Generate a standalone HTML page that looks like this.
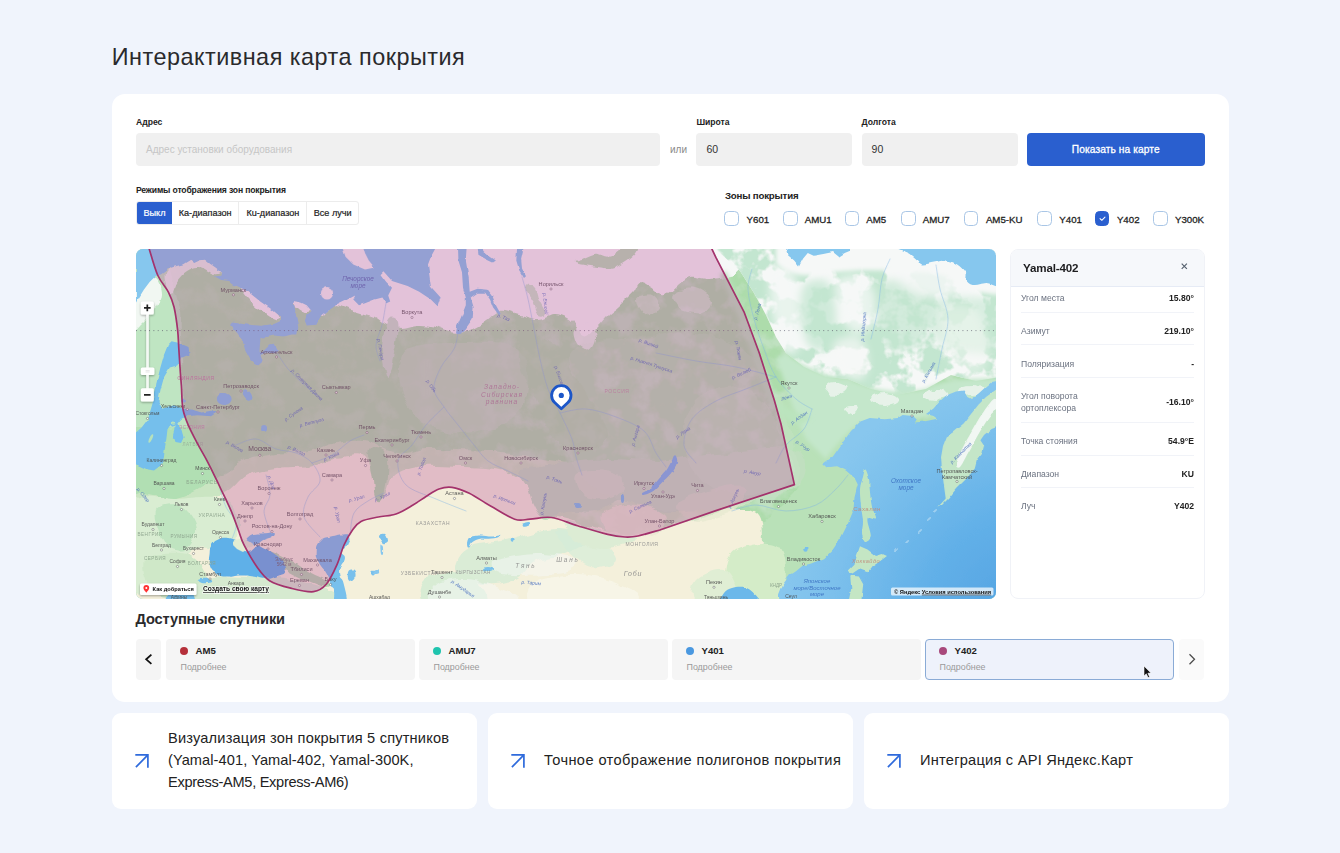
<!DOCTYPE html>
<html lang="ru">
<head>
<meta charset="utf-8">
<title>Интерактивная карта покрытия</title>
<style>
*{box-sizing:border-box;margin:0;padding:0}
html,body{width:1340px;height:853px;overflow:hidden}
body{background:#f0f4fc;font-family:"Liberation Sans",sans-serif;color:#222;position:relative}
.abs{position:absolute;white-space:nowrap}
h1{position:absolute;left:111.8px;top:42px;font-weight:400;font-size:23.4px;line-height:30px;color:#2a2a2c;white-space:nowrap;letter-spacing:0.5px}
.card{position:absolute;left:111.5px;top:93.5px;width:1117px;height:608.5px;background:#fff;border-radius:13px}
.lbl{position:absolute;font-weight:700;font-size:8.6px;line-height:10px;color:#222;white-space:nowrap}
.inp{position:absolute;top:133px;height:32.6px;background:#f0f0f0;border-radius:4px;font-size:10.5px;line-height:33.4px;color:#333;padding-left:10px;white-space:nowrap}
.btn{position:absolute;left:1027px;top:132.5px;width:177.5px;height:33.1px;background:#2a5fcf;border-radius:4px;color:#fff;font-size:10.2px;line-height:33px;text-align:center;font-weight:400;letter-spacing:0.1px;-webkit-text-stroke:0.3px #fff}
.seg{position:absolute;left:136px;top:200.7px;height:24.8px;display:flex;border:1px solid #ececec;border-radius:3px;overflow:hidden;background:#fff}
.seg div{height:100%;-webkit-text-stroke:0.2px currentColor;font-size:9.1px;line-height:23px;color:#222;text-align:center;border-right:1px solid #ececec;white-space:nowrap;font-weight:400}
.seg div:last-child{border-right:0}
.seg .on{background:#2a5fcf;color:#fff;border-right:0}
.cb{position:absolute;top:210.8px;width:14.8px;height:14.8px;border:1px solid #a9c6e6;border-radius:4.5px;background:#fff}
.cb.on{background:#2a5fcf;border-color:#2a5fcf}
.cbl{position:absolute;top:212.5px;font-size:9.7px;line-height:13px;color:#222;white-space:nowrap;font-weight:400;-webkit-text-stroke:0.28px #222}
#map{position:absolute;left:136px;top:249px;width:859.5px;height:349.7px;border-radius:7px;overflow:hidden;background:#8ccbee}
.panel{position:absolute;left:1010px;top:248.5px;width:194.5px;height:350px;border:1px solid #f0f2f7;border-radius:8px;background:#fff;overflow:hidden}
.phead{position:absolute;left:0;top:0;width:100%;height:37px;background:#f6f8fb;border-bottom:1px solid #e6ebf5}
.pk{position:absolute;left:10px;font-size:8.6px;line-height:11.5px;color:#6b7280;white-space:nowrap}
.pv{position:absolute;right:9.5px;font-size:8.6px;line-height:11.5px;color:#222;font-weight:700;white-space:nowrap}
.sep{position:absolute;left:10px;right:9.5px;height:1px;background:#f1f3f8}
.sat{position:absolute;top:639.4px;height:40.2px;width:249px;background:#f5f5f5;border-radius:4px}
.sat i{position:absolute;left:14.2px;top:7.6px;width:8px;height:8px;border-radius:50%}
.sat b{position:absolute;left:29.5px;top:5.5px;font-size:9.6px;line-height:12px;font-weight:700;color:#222}
.sat span{position:absolute;left:14.5px;top:22.3px;font-size:8.9px;line-height:11px;color:#9a9a9a}
.nav{position:absolute;top:639.4px;height:40.2px;width:25.3px;background:#f5f5f5;border-radius:4px}
.feat{position:absolute;top:713px;height:95.5px;width:365px;background:#fff;border-radius:9px}
.feat p{position:absolute;left:56.5px;font-size:14.6px;line-height:22.4px;color:#222;white-space:nowrap}
.feat svg{position:absolute;left:23.9px;top:41px}
</style>
</head>
<body>
<h1>Интерактивная карта покрытия</h1>
<div class="card"></div>

<div class="lbl" style="left:136px;top:116.9px">Адрес</div>
<div class="inp" style="left:136px;width:524px;color:#c6c6c6;font-size:10px">Адрес установки оборудования</div>
<div class="abs" style="left:670px;top:143px;font-size:10px;line-height:13px;color:#8a8a8a">или</div>
<div class="lbl" style="left:696.4px;top:116.9px">Широта</div>
<div class="inp" style="left:696.4px;width:155.8px">60</div>
<div class="lbl" style="left:861.6px;top:116.9px">Долгота</div>
<div class="inp" style="left:861.6px;width:156px">90</div>
<div class="btn">Показать на карте</div>

<div class="lbl" style="left:136px;top:184.8px;letter-spacing:-0.16px">Режимы отображения зон покрытия</div>
<div class="seg">
  <div class="on" style="width:35px">Выкл</div><div style="width:67.4px">Ка-диапазон</div><div style="width:68px">Кu-диапазон</div><div style="width:50.5px">Все лучи</div>
</div>

<div class="abs" style="left:725px;top:189.4px;font-size:9.7px;line-height:13px;font-weight:700;color:#222;letter-spacing:-0.2px">Зоны покрытия</div>
<div class="cb" style="left:724.4px"></div><div class="cbl" style="left:746.6px">Y601</div>
<div class="cb" style="left:783px"></div><div class="cbl" style="left:804.8px">AMU1</div>
<div class="cb" style="left:844.6px"></div><div class="cbl" style="left:866.3px">AM5</div>
<div class="cb" style="left:901.2px"></div><div class="cbl" style="left:922.7px">AMU7</div>
<div class="cb" style="left:963.7px"></div><div class="cbl" style="left:985.9px">AM5-KU</div>
<div class="cb" style="left:1037px"></div><div class="cbl" style="left:1059.3px">Y401</div>
<div class="cb on" style="left:1094.6px"><svg width="14.8" height="14.8" viewBox="0 0 15 15" style="position:absolute;left:-1px;top:-1px"><path d="M5.1 7.7 L6.9 9.4 L10.1 6.1" fill="none" stroke="#fff" stroke-width="1.05" stroke-linecap="round" stroke-linejoin="round"/></svg></div><div class="cbl" style="left:1116.9px">Y402</div>
<div class="cb" style="left:1153.3px"></div><div class="cbl" style="left:1175px">Y300K</div>

<div id="map"><svg width="859.5" height="349.7" viewBox="0 0 859.5 349.7" style="display:block"><defs>
<filter id="rough" x="-5%" y="-5%" width="110%" height="110%"><feTurbulence type="fractalNoise" baseFrequency="0.06" numOctaves="3" seed="7" result="n"/><feDisplacementMap in="SourceGraphic" in2="n" scale="8" xChannelSelector="R" yChannelSelector="G"/></filter>
<filter id="rough2" x="-5%" y="-5%" width="110%" height="110%"><feTurbulence type="fractalNoise" baseFrequency="0.09" numOctaves="3" seed="3" result="n"/><feDisplacementMap in="SourceGraphic" in2="n" scale="9" xChannelSelector="R" yChannelSelector="G"/></filter>
<filter id="coast" x="-5%" y="-5%" width="110%" height="110%"><feTurbulence type="fractalNoise" baseFrequency="0.12" numOctaves="2" seed="11" result="n"/><feDisplacementMap in="SourceGraphic" in2="n" scale="3" xChannelSelector="R" yChannelSelector="G"/></filter>
<filter id="mot" x="0" y="0" width="100%" height="100%" color-interpolation-filters="sRGB"><feTurbulence type="fractalNoise" baseFrequency="0.05" numOctaves="4" seed="5"/><feColorMatrix type="matrix" values="0 0 0 0 0.80  0 0 0 0 0.895  0 0 0 0 0.81  3.5 0 0 0 -1.55"/><feComponentTransfer><feFuncA type="linear" slope="0.6"/></feComponentTransfer></filter>
<filter id="mot2" x="0" y="0" width="100%" height="100%" color-interpolation-filters="sRGB"><feTurbulence type="fractalNoise" baseFrequency="0.04" numOctaves="4" seed="23"/><feColorMatrix type="matrix" values="0 0 0 0 0.765  0 0 0 0 0.90  0 0 0 0 0.815  8 0 0 0 -3.5"/></filter>
<filter id="blur2"><feGaussianBlur stdDeviation="2"/></filter>
<filter id="blur6" x="-20%" y="-20%" width="140%" height="140%"><feGaussianBlur stdDeviation="4.5"/></filter>
<filter id="sh" x="-30%" y="-30%" width="160%" height="160%"><feGaussianBlur in="SourceAlpha" stdDeviation="0.8"/><feOffset dy="0.6"/><feComponentTransfer><feFuncA type="linear" slope="0.35"/></feComponentTransfer><feMerge><feMergeNode/><feMergeNode in="SourceGraphic"/></feMerge></filter>
<radialGradient id="deep" gradientUnits="userSpaceOnUse" cx="900" cy="380" r="260"><stop offset="0" stop-color="#4f9fe0"/><stop offset="0.45" stop-color="#62b0e8"/><stop offset="0.8" stop-color="#7cc0ec"/><stop offset="1" stop-color="#88c7ee"/></radialGradient>
</defs>
<rect x="0" y="0" width="859.5" height="349.7" fill="#addcab"/>
<linearGradient id="mg" gradientUnits="userSpaceOnUse" x1="0" y1="0" x2="860" y2="0"><stop offset="0" stop-color="#fff" stop-opacity="0.35"/><stop offset="0.28" stop-color="#fff" stop-opacity="0.45"/><stop offset="0.5" stop-color="#fff" stop-opacity="1"/><stop offset="1" stop-color="#fff" stop-opacity="1"/></linearGradient><mask id="mm" maskUnits="userSpaceOnUse" x="0" y="0" width="860" height="350"><rect x="0" y="0" width="860" height="350" fill="url(#mg)"/></mask>
<g mask="url(#mm)"><rect x="0" y="0" width="859.5" height="349.7" filter="url(#mot)"/></g>
<g filter="url(#rough)"><polygon points="-5.0,10.0 30.0,10.0 44.0,60.0 48.0,160.0 56.0,185.0 -5.0,185.0" fill="#bfe5c2" /><polygon points="-5.0,178.0 54.0,178.0 62.0,195.0 94.0,258.0 -5.0,258.0" fill="#b1dfb3" /><path d="M640.0 150.0C648.3 143.3 680.0 158.3 700.0 160.0C720.0 161.7 743.3 159.2 760.0 160.0C776.7 160.8 805.0 161.7 800.0 165.0C795.0 168.3 743.0 168.3 730.0 180.0C717.0 191.7 724.5 219.2 722.0 235.0C719.5 250.8 720.3 262.5 715.0 275.0C709.7 287.5 700.8 300.8 690.0 310.0C679.2 319.2 658.3 323.0 650.0 330.0C641.7 337.0 648.3 348.3 640.0 352.0C631.7 355.7 606.7 360.7 600.0 352.0C593.3 343.3 593.3 315.0 600.0 300.0C606.7 285.0 629.7 272.7 640.0 262.0C650.3 251.3 660.3 246.3 662.0 236.0C663.7 225.7 653.7 214.3 650.0 200.0C646.3 185.7 631.7 156.7 640.0 150.0Z" fill="#b9e1b8" /><path d="M180.0 -5.0C248.8 -14.2 515.0 -9.5 585.0 -5.0C655.0 -0.5 599.3 16.5 600.0 22.0C600.7 27.5 594.0 26.7 589.0 28.0C584.0 29.3 575.8 30.0 570.0 30.0C564.2 30.0 558.7 27.0 554.0 28.0C549.3 29.0 545.3 33.5 542.0 36.0C538.7 38.5 536.8 41.5 534.0 43.0C531.2 44.5 528.2 45.8 525.0 45.0C521.8 44.2 518.5 40.0 515.0 38.0C511.5 36.0 506.8 32.3 504.0 33.0C501.2 33.7 500.3 39.2 498.0 42.0C495.7 44.8 492.7 47.3 490.0 50.0C487.3 52.7 485.0 55.3 482.0 58.0C479.0 60.7 475.5 62.7 472.0 66.0C468.5 69.3 464.3 74.7 461.0 78.0C457.7 81.3 454.7 85.0 452.0 86.0C449.3 87.0 447.3 86.0 445.0 84.0C442.7 82.0 440.5 76.7 438.0 74.0C435.5 71.3 433.3 69.5 430.0 68.0C426.7 66.5 422.5 64.7 418.0 65.0C413.5 65.3 408.8 69.8 403.0 70.0C397.2 70.2 389.5 67.3 383.0 66.0C376.5 64.7 370.3 60.7 364.0 62.0C357.7 63.3 352.0 70.3 345.0 74.0C338.0 77.7 329.5 83.3 322.0 84.0C314.5 84.7 306.7 79.3 300.0 78.0C293.3 76.7 287.7 75.8 282.0 76.0C276.3 76.2 271.3 79.0 266.0 79.0C260.7 79.0 254.7 77.8 250.0 76.0C245.3 74.2 242.2 70.0 238.0 68.0C233.8 66.0 229.3 65.3 225.0 64.0C220.7 62.7 216.2 61.3 212.0 60.0C207.8 58.7 203.3 56.0 200.0 56.0C196.7 56.0 194.3 58.3 192.0 60.0C189.7 61.7 188.3 66.0 186.0 66.0C183.7 66.0 180.3 62.7 178.0 60.0C175.7 57.3 171.7 60.8 172.0 50.0C172.3 39.2 111.2 4.2 180.0 -5.0Z" fill="#f6f8f7" /><path d="M438.0 80.0C439.7 76.7 448.3 74.7 452.0 76.0C455.7 77.3 459.7 84.0 460.0 88.0C460.3 92.0 457.0 98.7 454.0 100.0C451.0 101.3 444.7 99.3 442.0 96.0C439.3 92.7 436.3 83.3 438.0 80.0Z" fill="#f6f8f7" opacity="0.75"/><path d="M538.0 44.0C540.7 40.7 553.7 38.7 560.0 40.0C566.3 41.3 575.0 48.0 576.0 52.0C577.0 56.0 571.3 62.7 566.0 64.0C560.7 65.3 548.7 63.3 544.0 60.0C539.3 56.7 535.3 47.3 538.0 44.0Z" fill="#f6f8f7" opacity="0.4"/><path d="M500.0 50.0C501.0 46.7 512.3 44.7 516.0 46.0C519.7 47.3 523.0 54.7 522.0 58.0C521.0 61.3 513.7 67.3 510.0 66.0C506.3 64.7 499.0 53.3 500.0 50.0Z" fill="#f6f8f7" opacity="0.35"/><path d="M437.7 13.6C437.4 12.5 445.5 11.0 449.4 9.7C453.3 8.4 457.1 6.0 461.0 5.8C464.9 5.6 469.5 9.0 472.7 8.7C475.9 8.4 477.5 5.7 480.4 3.9C483.3 2.1 486.4 -1.0 490.0 -2.0C493.6 -3.0 500.5 -3.3 501.8 -2.0C503.1 -0.7 500.2 3.2 497.9 5.8C495.6 8.4 491.8 11.3 488.2 13.6C484.6 15.9 480.4 18.6 476.5 19.4C472.6 20.2 469.1 18.9 464.9 18.4C460.7 17.9 455.8 17.3 451.3 16.5C446.8 15.7 438.0 14.7 437.7 13.6Z" fill="#addcab" opacity="0.85"/><path d="M392.0 36.0C393.7 35.3 398.0 37.3 400.0 40.0C402.0 42.7 402.3 48.0 404.0 52.0C405.7 56.0 410.3 61.7 410.0 64.0C409.7 66.3 404.3 67.7 402.0 66.0C399.7 64.3 398.0 57.7 396.0 54.0C394.0 50.3 390.7 47.0 390.0 44.0C389.3 41.0 390.3 36.7 392.0 36.0Z" fill="#addcab" opacity="0.6"/><path d="M104.0 38.0C105.0 37.0 113.3 41.2 118.0 44.0C122.7 46.8 127.5 51.2 132.0 55.0C136.5 58.8 143.7 64.3 145.0 67.0C146.3 69.7 143.2 71.8 140.0 71.0C136.8 70.2 130.7 65.5 126.0 62.0C121.3 58.5 115.7 54.0 112.0 50.0C108.3 46.0 103.0 39.0 104.0 38.0Z" fill="#f6f8f7" /><path d="M30.0 22.0C32.7 18.3 41.0 16.0 46.0 14.0C51.0 12.0 55.3 10.3 60.0 10.0C64.7 9.7 69.7 10.0 74.0 12.0C78.3 14.0 85.3 19.8 86.0 22.0C86.7 24.2 81.7 25.7 78.0 25.0C74.3 24.3 68.3 18.5 64.0 18.0C59.7 17.5 55.7 19.7 52.0 22.0C48.3 24.3 44.7 28.3 42.0 32.0C39.3 35.7 38.0 43.3 36.0 44.0C34.0 44.7 31.0 39.7 30.0 36.0C29.0 32.3 27.3 25.7 30.0 22.0Z" fill="#f6f8f7" opacity="0.8"/><path d="M157.0 51.0C159.0 50.2 168.8 53.2 172.0 55.0C175.2 56.8 176.7 60.5 176.0 62.0C175.3 63.5 170.7 64.3 168.0 64.0C165.3 63.7 161.8 62.2 160.0 60.0C158.2 57.8 155.0 51.8 157.0 51.0Z" fill="#f6f8f7" /><path d="M-5.0 48.0C-2.8 40.0 3.8 37.0 8.0 34.0C12.2 31.0 17.2 28.3 20.0 30.0C22.8 31.7 25.2 39.0 25.0 44.0C24.8 49.0 22.0 55.0 19.0 60.0C16.0 65.0 11.0 70.3 7.0 74.0C3.0 77.7 -3.0 86.3 -5.0 82.0C-7.0 77.7 -7.2 56.0 -5.0 48.0Z" fill="#f6f8f7" opacity="0.9"/><path d="M252.0 72.0C254.7 67.7 260.7 69.3 262.0 74.0C263.3 78.7 261.7 90.7 260.0 100.0C258.3 109.3 254.3 130.0 252.0 130.0C249.7 130.0 246.0 109.7 246.0 100.0C246.0 90.3 249.3 76.3 252.0 72.0Z" fill="#c9e3cc" /><path d="M272.0 100.0C283.0 93.2 312.0 94.0 330.0 94.0C348.0 94.0 369.7 92.3 380.0 100.0C390.3 107.7 393.3 128.0 392.0 140.0C390.7 152.0 383.7 164.7 372.0 172.0C360.3 179.3 337.0 184.3 322.0 184.0C307.0 183.7 291.7 178.2 282.0 170.0C272.3 161.8 265.7 146.7 264.0 135.0C262.3 123.3 261.0 106.8 272.0 100.0Z" fill="#c6e2c6" opacity="0.5"/><path d="M80.0 230.0C91.7 223.5 100.0 215.3 110.0 211.0C120.0 206.7 129.5 205.5 140.0 204.0C150.5 202.5 163.8 203.7 173.0 202.0C182.2 200.3 186.0 195.8 195.0 194.0C204.0 192.2 217.8 190.0 227.0 191.0C236.2 192.0 242.8 197.8 250.0 200.0C257.2 202.2 263.3 204.0 270.0 204.0C276.7 204.0 281.7 200.5 290.0 200.0C298.3 199.5 310.0 200.7 320.0 201.0C330.0 201.3 339.2 201.0 350.0 202.0C360.8 203.0 373.3 205.3 385.0 207.0C396.7 208.7 405.8 209.5 420.0 212.0C434.2 214.5 453.3 218.7 470.0 222.0C486.7 225.3 501.7 229.7 520.0 232.0C538.3 234.3 560.0 235.0 580.0 236.0C600.0 237.0 626.3 238.0 640.0 238.0C653.7 238.0 668.7 232.3 662.0 236.0C655.3 239.7 606.2 254.3 600.0 260.0C593.8 265.7 621.3 258.3 625.0 270.0C628.7 281.7 626.2 315.8 622.0 330.0C617.8 344.2 704.5 350.8 600.0 355.0C495.5 359.2 95.8 372.5 -5.0 355.0C-105.8 337.5 -12.5 267.5 -5.0 250.0C2.5 232.5 25.8 253.3 40.0 250.0C54.2 246.7 68.3 236.5 80.0 230.0Z" fill="#f4f0db" opacity="0.38"/><path d="M88.0 244.0C99.7 239.2 101.3 231.0 110.0 227.0C118.7 223.0 129.5 221.5 140.0 220.0C150.5 218.5 163.8 219.7 173.0 218.0C182.2 216.3 186.0 211.8 195.0 210.0C204.0 208.2 220.2 204.7 227.0 207.0C233.8 209.3 233.8 217.5 236.0 224.0C238.2 230.5 237.7 242.7 240.0 246.0C242.3 249.3 247.3 246.8 250.0 244.0C252.7 241.2 252.7 232.8 256.0 229.0C259.3 225.2 264.3 223.0 270.0 221.0C275.7 219.0 281.7 217.5 290.0 217.0C298.3 216.5 310.0 217.7 320.0 218.0C330.0 218.3 340.0 217.8 350.0 219.0C360.0 220.2 373.0 221.5 380.0 225.0C387.0 228.5 388.3 233.8 392.0 240.0C395.7 246.2 395.7 257.0 402.0 262.0C408.3 267.0 418.7 266.7 430.0 270.0C441.3 273.3 456.7 279.5 470.0 282.0C483.3 284.5 495.0 287.0 510.0 285.0C525.0 283.0 545.0 274.2 560.0 270.0C575.0 265.8 589.2 260.0 600.0 260.0C610.8 260.0 621.3 258.3 625.0 270.0C628.7 281.7 626.2 315.8 622.0 330.0C617.8 344.2 704.5 350.8 600.0 355.0C495.5 359.2 95.8 371.5 -5.0 355.0C-105.8 338.5 -12.5 272.5 -5.0 256.0C2.5 239.5 24.5 258.0 40.0 256.0C55.5 254.0 76.3 248.8 88.0 244.0Z" fill="#f4f0db" /><path d="M-5.0 254.0C2.5 239.0 24.2 250.7 40.0 250.0C55.8 249.3 79.7 245.3 90.0 250.0C100.3 254.7 101.7 269.7 102.0 278.0C102.3 286.3 99.0 296.3 92.0 300.0C85.0 303.7 70.3 295.0 60.0 300.0C49.7 305.0 40.8 323.3 30.0 330.0C19.2 336.7 0.8 352.7 -5.0 340.0C-10.8 327.3 -12.5 269.0 -5.0 254.0Z" fill="#d9edd2" /><path d="M20.0 262.0C22.5 255.7 38.3 255.0 45.0 258.0C51.7 261.0 59.2 273.0 60.0 280.0C60.8 287.0 55.0 297.3 50.0 300.0C45.0 302.7 35.0 302.3 30.0 296.0C25.0 289.7 17.5 268.3 20.0 262.0Z" fill="#bfe4c0" /><path d="M10.0 310.0C15.0 303.3 40.0 302.5 50.0 305.0C60.0 307.5 68.3 318.3 70.0 325.0C71.7 331.7 68.3 341.7 60.0 345.0C51.7 348.3 28.3 350.8 20.0 345.0C11.7 339.2 5.0 316.7 10.0 310.0Z" fill="#cfe8c8" /><path d="M70.0 330.0C78.3 325.5 96.7 328.0 110.0 328.0C123.3 328.0 136.7 328.0 150.0 330.0C163.3 332.0 182.3 335.8 190.0 340.0C197.7 344.2 217.7 352.5 196.0 355.0C174.3 357.5 81.0 359.2 60.0 355.0C39.0 350.8 61.7 334.5 70.0 330.0Z" fill="#d6ead0" /><path d="M126.0 300.0C128.7 299.7 135.0 302.0 140.0 304.0C145.0 306.0 150.7 309.0 156.0 312.0C161.3 315.0 166.0 318.7 172.0 322.0C178.0 325.3 189.0 329.3 192.0 332.0C195.0 334.7 193.7 338.2 190.0 338.0C186.3 337.8 176.3 333.7 170.0 331.0C163.7 328.3 157.7 325.2 152.0 322.0C146.3 318.8 140.7 314.7 136.0 312.0C131.3 309.3 125.7 308.0 124.0 306.0C122.3 304.0 123.3 300.3 126.0 300.0Z" fill="#b4d8b0" /><path d="M233.0 200.0C235.2 196.7 246.0 197.3 249.0 202.0C252.0 206.7 251.5 220.0 251.0 228.0C250.5 236.0 248.0 247.0 246.0 250.0C244.0 253.0 240.7 250.7 239.0 246.0C237.3 241.3 237.0 229.7 236.0 222.0C235.0 214.3 230.8 203.3 233.0 200.0Z" fill="#addcab" /><path d="M385.0 222.0C389.7 217.8 405.8 217.0 420.0 215.0C434.2 213.0 453.3 210.5 470.0 210.0C486.7 209.5 501.7 212.8 520.0 212.0C538.3 211.2 556.7 207.0 580.0 205.0C603.3 203.0 646.3 194.8 660.0 200.0C673.7 205.2 672.0 226.7 662.0 236.0C652.0 245.3 617.0 251.7 600.0 256.0C583.0 260.3 573.3 261.0 560.0 262.0C546.7 263.0 531.7 264.0 520.0 262.0C508.3 260.0 500.0 250.0 490.0 250.0C480.0 250.0 470.0 260.0 460.0 262.0C450.0 264.0 438.3 260.7 430.0 262.0C421.7 263.3 415.3 270.7 410.0 270.0C404.7 269.3 401.0 263.0 398.0 258.0C395.0 253.0 394.2 246.0 392.0 240.0C389.8 234.0 380.3 226.2 385.0 222.0Z" fill="#c0dfbf" /><path d="M440.0 225.0C444.2 221.2 461.7 219.8 470.0 222.0C478.3 224.2 490.0 233.3 490.0 238.0C490.0 242.7 477.5 248.8 470.0 250.0C462.5 251.2 450.0 249.2 445.0 245.0C440.0 240.8 435.8 228.8 440.0 225.0Z" fill="#e4e8d0" opacity="0.45"/><path d="M468.0 262.0C473.0 257.8 489.7 254.0 500.0 255.0C510.3 256.0 526.7 262.8 530.0 268.0C533.3 273.2 526.7 282.7 520.0 286.0C513.3 289.3 498.3 289.0 490.0 288.0C481.7 287.0 473.7 284.3 470.0 280.0C466.3 275.7 463.0 266.2 468.0 262.0Z" fill="#ece8d4" opacity="0.75"/><path d="M540.0 255.0C543.3 249.7 568.3 242.8 580.0 240.0C591.7 237.2 606.7 234.7 610.0 238.0C613.3 241.3 608.3 254.3 600.0 260.0C591.7 265.7 570.0 272.8 560.0 272.0C550.0 271.2 536.7 260.3 540.0 255.0Z" fill="#dfe6cc" opacity="0.5"/><path d="M330.0 300.0C338.3 294.5 355.0 295.3 370.0 292.0C385.0 288.7 406.7 280.3 420.0 280.0C433.3 279.7 448.3 285.8 450.0 290.0C451.7 294.2 438.3 301.3 430.0 305.0C421.7 308.7 408.3 307.8 400.0 312.0C391.7 316.2 388.3 326.2 380.0 330.0C371.7 333.8 360.0 335.8 350.0 335.0C340.0 334.2 323.3 330.8 320.0 325.0C316.7 319.2 321.7 305.5 330.0 300.0Z" fill="#cfe9d4" opacity="0.7"/><path d="M360.0 312.0C366.3 308.8 386.7 305.3 400.0 305.0C413.3 304.7 435.0 307.2 440.0 310.0C445.0 312.8 438.3 319.3 430.0 322.0C421.7 324.7 401.3 325.7 390.0 326.0C378.7 326.3 367.0 326.3 362.0 324.0C357.0 321.7 353.7 315.2 360.0 312.0Z" fill="#f6f8f7" opacity="0.5"/><path d="M420.0 282.0C425.0 280.3 450.0 285.3 460.0 290.0C470.0 294.7 480.8 305.3 480.0 310.0C479.2 314.7 463.3 319.7 455.0 318.0C446.7 316.3 435.8 306.0 430.0 300.0C424.2 294.0 415.0 283.7 420.0 282.0Z" fill="#d4ecd8" opacity="0.7"/><path d="M290.0 330.0C296.7 325.2 320.0 322.3 330.0 326.0C340.0 329.7 356.7 347.2 350.0 352.0C343.3 356.8 300.0 358.7 290.0 355.0C280.0 351.3 283.3 334.8 290.0 330.0Z" fill="#d8ecd4" /><path d="M430.0 272.0C435.0 270.7 458.3 281.0 470.0 284.0C481.7 287.0 500.0 287.3 500.0 290.0C500.0 292.7 480.0 299.7 470.0 300.0C460.0 300.3 446.7 296.7 440.0 292.0C433.3 287.3 425.0 273.3 430.0 272.0Z" fill="#dcecd4" /><path d="M300.0 335.0C305.0 330.8 320.0 329.5 330.0 330.0C340.0 330.5 351.7 334.3 360.0 338.0C368.3 341.7 390.0 349.2 380.0 352.0C370.0 354.8 313.3 357.8 300.0 355.0C286.7 352.2 295.0 339.2 300.0 335.0Z" fill="#f6f8f7" opacity="0.5"/><path d="M400.0 332.0C406.7 327.2 426.7 325.7 440.0 326.0C453.3 326.3 470.0 329.7 480.0 334.0C490.0 338.3 513.3 348.5 500.0 352.0C486.7 355.5 416.7 358.3 400.0 355.0C383.3 351.7 393.3 336.8 400.0 332.0Z" fill="#f8f6ea" opacity="0.8"/><path d="M600.0 300.0C608.3 295.2 631.7 291.0 640.0 296.0C648.3 301.0 650.0 320.2 650.0 330.0C650.0 339.8 649.0 350.8 640.0 355.0C631.0 359.2 604.3 360.0 596.0 355.0C587.7 350.0 589.3 334.2 590.0 325.0C590.7 315.8 591.7 304.8 600.0 300.0Z" fill="#d4ecc8" /><path d="M560.0 330.0C565.0 324.5 583.3 317.8 590.0 322.0C596.7 326.2 605.0 349.5 600.0 355.0C595.0 360.5 566.7 359.2 560.0 355.0C553.3 350.8 555.0 335.5 560.0 330.0Z" fill="#e0eed4" /><path d="M440.0 100.0C452.5 88.3 480.0 92.7 500.0 90.0C520.0 87.3 540.0 80.7 560.0 84.0C580.0 87.3 605.0 95.7 620.0 110.0C635.0 124.3 643.3 149.7 650.0 170.0C656.7 190.3 668.3 217.7 660.0 232.0C651.7 246.3 620.0 251.0 600.0 256.0C580.0 261.0 560.0 263.0 540.0 262.0C520.0 261.0 496.7 257.0 480.0 250.0C463.3 243.0 449.2 235.0 440.0 220.0C430.8 205.0 425.0 180.0 425.0 160.0C425.0 140.0 427.5 111.7 440.0 100.0Z" fill="#d2e8d2" opacity="0.2"/><path d="M560.0 150.0C570.3 140.7 595.8 135.0 610.0 140.0C624.2 145.0 637.5 165.0 645.0 180.0C652.5 195.0 660.8 219.0 655.0 230.0C649.2 241.0 624.2 245.0 610.0 246.0C595.8 247.0 580.3 244.3 570.0 236.0C559.7 227.7 549.7 210.3 548.0 196.0C546.3 181.7 549.7 159.3 560.0 150.0Z" fill="#d8ead6" opacity="0.2"/><path d="M388.0 92.0C394.0 88.7 410.3 90.3 420.0 98.0C429.7 105.7 437.3 123.7 446.0 138.0C454.7 152.3 471.0 173.3 472.0 184.0C473.0 194.7 460.7 200.7 452.0 202.0C443.3 203.3 428.7 200.7 420.0 192.0C411.3 183.3 406.0 162.3 400.0 150.0C394.0 137.7 386.0 127.7 384.0 118.0C382.0 108.3 382.0 95.3 388.0 92.0Z" fill="#addcab" opacity="0.55"/></g>
<clipPath id="ne"><polygon points="574.0,-5.0 865.0,-5.0 865.0,128.0 840.0,132.0 815.0,126.0 790.0,140.0 760.0,146.0 735.0,140.0 712.0,130.0 690.0,128.0 668.0,118.0 650.0,104.0 640.0,88.0 630.0,66.0 618.0,44.0 604.0,22.0"/></clipPath>
<g clip-path="url(#ne)"><rect x="560" y="-5" width="310" height="180" fill="#f6f8f7"/><rect x="560" y="0" width="300" height="175" filter="url(#mot2)"/>
<g filter="url(#blur6)"><path d="M636.0 22.0C639.0 16.7 647.3 15.0 652.0 18.0C656.7 21.0 661.3 31.3 664.0 40.0C666.7 48.7 668.3 60.0 668.0 70.0C667.7 80.0 665.3 94.3 662.0 100.0C658.7 105.7 651.7 107.3 648.0 104.0C644.3 100.7 642.3 89.0 640.0 80.0C637.7 71.0 634.7 59.7 634.0 50.0C633.3 40.3 633.0 27.3 636.0 22.0Z" fill="#f6f8f7" opacity="0.75"/><path d="M668.0 36.0C672.3 31.0 684.7 28.7 690.0 32.0C695.3 35.3 698.7 46.7 700.0 56.0C701.3 65.3 700.7 80.3 698.0 88.0C695.3 95.7 688.7 101.3 684.0 102.0C679.3 102.7 673.3 98.7 670.0 92.0C666.7 85.3 664.3 71.3 664.0 62.0C663.7 52.7 663.7 41.0 668.0 36.0Z" fill="#c3e6d0" opacity="0.75"/><path d="M702.0 30.0C706.3 26.7 719.7 24.7 726.0 28.0C732.3 31.3 738.3 42.0 740.0 50.0C741.7 58.0 739.3 70.3 736.0 76.0C732.7 81.7 725.0 85.0 720.0 84.0C715.0 83.0 709.3 76.0 706.0 70.0C702.7 64.0 700.7 54.7 700.0 48.0C699.3 41.3 697.7 33.3 702.0 30.0Z" fill="#f6f8f7" opacity="0.75"/><path d="M742.0 36.0C747.0 29.7 761.3 30.7 770.0 32.0C778.7 33.3 790.3 36.0 794.0 44.0C797.7 52.0 795.0 70.7 792.0 80.0C789.0 89.3 783.0 97.0 776.0 100.0C769.0 103.0 756.0 103.0 750.0 98.0C744.0 93.0 741.3 80.3 740.0 70.0C738.7 59.7 737.0 42.3 742.0 36.0Z" fill="#c3e6d0" opacity="0.7"/><path d="M760.0 14.0C764.3 10.0 779.7 9.3 790.0 10.0C800.3 10.7 815.3 13.7 822.0 18.0C828.7 22.3 831.7 31.0 830.0 36.0C828.3 41.0 819.7 46.3 812.0 48.0C804.3 49.7 792.0 48.3 784.0 46.0C776.0 43.7 768.0 39.3 764.0 34.0C760.0 28.7 755.7 18.0 760.0 14.0Z" fill="#f6f8f7" opacity="0.8"/><path d="M796.0 52.0C802.0 47.3 819.0 47.3 830.0 48.0C841.0 48.7 856.7 47.3 862.0 56.0C867.3 64.7 866.3 92.0 862.0 100.0C857.7 108.0 845.3 104.7 836.0 104.0C826.7 103.3 813.0 100.7 806.0 96.0C799.0 91.3 795.7 83.3 794.0 76.0C792.3 68.7 790.0 56.7 796.0 52.0Z" fill="#c3e6d0" opacity="0.6"/><path d="M700.0 92.0C704.0 88.7 716.7 85.0 722.0 88.0C727.3 91.0 731.3 103.0 732.0 110.0C732.7 117.0 730.0 127.3 726.0 130.0C722.0 132.7 712.7 129.7 708.0 126.0C703.3 122.3 699.3 113.7 698.0 108.0C696.7 102.3 696.0 95.3 700.0 92.0Z" fill="#f6f8f7" opacity="0.7"/><path d="M806.0 60.0C810.7 54.3 828.3 53.0 836.0 58.0C843.7 63.0 850.3 79.0 852.0 90.0C853.7 101.0 851.0 119.0 846.0 124.0C841.0 129.0 828.3 125.3 822.0 120.0C815.7 114.7 810.7 102.0 808.0 92.0C805.3 82.0 801.3 65.7 806.0 60.0Z" fill="#f6f8f7" opacity="0.45"/></g>
<path d="M640 -5H865V46C840 44 824 40 812 28C800 22 780 24 760 22C730 20 700 22 680 26C660 28 648 22 640 14Z" fill="#f6f8f7" filter="url(#blur2)"/>
</g>
<path d="M650 104C668 118 690 128 712 130C735 140 760 146 790 140C815 126 840 132 865 128V160C840 150 820 150 800 166C780 172 750 172 724 174C712 182 700 196 690 210L670 190C660 170 652 140 640 110Z" fill="#c4e7cb" filter="url(#blur2)"/>
<g opacity="0.7" filter="url(#rough2)"><ellipse cx="748" cy="150" rx="14" ry="6" fill="#f6f8f7"/><ellipse cx="800" cy="146" rx="12" ry="5" fill="#f6f8f7"/><ellipse cx="836" cy="142" rx="14" ry="5" fill="#f6f8f7"/><ellipse cx="700" cy="140" rx="10" ry="6" fill="#f6f8f7"/><ellipse cx="716" cy="160" rx="7" ry="4" fill="#f6f8f7"/></g>
<path d="M590 22C598 40 606 58 614 80C622 104 630 126 640 150C650 160 664 166 676 168L664 176C650 172 640 164 632 150C624 128 616 104 608 82C600 60 592 44 584 26Z" fill="#bbe4be" filter="url(#blur2)"/>
<g filter="url(#coast)"><polygon points="0.0,53.4 7.8,40.7 13.6,33.0 19.4,27.2 25.2,25.2 33.0,19.4 38.8,17.5 46.6,15.5 54.3,10.7 58.2,14.0 64.0,11.3 68.9,10.7 73.7,14.6 79.5,18.4 86.3,23.7 85.4,26.8 78.6,27.6 85.4,31.0 93.1,32.0 97.0,35.3 104.8,38.8 112.5,43.1 124.2,52.4 135.8,60.5 144.0,67.0 144.0,72.2 138.5,74.7 125.5,76.8 112.5,75.7 96.0,73.6 94.0,76.0 101.7,84.4 107.0,93.0 109.3,101.7 114.7,111.5 122.3,116.5 126.6,112.6 124.5,106.0 130.0,103.5 138.5,104.3 141.8,101.7 138.5,95.2 147.2,87.7 155.8,85.5 161.3,85.5 162.3,78.0 160.2,67.0 157.5,52.0 165.0,53.4 170.7,56.3 175.6,62.0 170.7,66.0 168.8,71.8 170.7,76.6 180.4,75.7 184.3,67.9 192.0,62.0 199.8,56.3 209.5,51.4 219.2,46.6 217.3,50.4 223.0,56.3 229.0,54.3 238.6,50.4 246.4,48.5 250.3,54.3 254.2,52.4 252.2,46.6 256.0,38.8 250.3,33.0 244.5,25.2 247.4,22.3 256.0,32.0 271.6,36.9 283.2,42.7 294.9,50.4 301.7,57.2 304.6,48.5 294.9,37.8 292.0,15.5 294.9,7.8 300.7,-3.0 0.0,-3.0" fill="#86c7ee" /><polygon points="322.0,-3.0 322.4,11.6 326.0,23.3 327.0,38.8 329.8,48.5 329.8,56.3 326.0,66.0 321.0,77.6 320.0,84.4 324.0,85.4 329.8,79.5 336.6,69.8 337.6,58.2 334.7,48.5 341.5,43.7 349.2,43.7 354.0,50.4 357.0,58.2 362.8,66.0 364.7,65.0 359.9,56.3 357.0,48.5 351.2,40.7 341.5,39.8 333.7,42.7 332.7,29.1 329.8,11.6 330.8,-3.0" fill="#86c7ee" /><polygon points="341.5,-3.0 342.4,5.8 349.2,9.7 357.0,13.6 359.9,11.6 353.0,6.8 347.3,2.0 346.3,-3.0" fill="#86c7ee" /><polygon points="381.2,-3.0 380.3,11.6 383.2,21.3 388.0,29.1 390.0,27.2 386.0,19.4 385.1,9.7 388.0,-3.0" fill="#86c7ee" /><polygon points="649.5,-3.0 651.4,5.8 658.2,11.6 663.0,17.5 667.0,9.7 671.8,3.9 677.6,6.8 687.3,4.9 697.0,2.9 702.8,7.8 708.7,3.9 713.5,1.9 714.5,-3.0" fill="#86c7ee" /><path d="M765.9 -3.0C750.8 -1.7 771.9 2.5 774.6 4.9C777.4 7.3 780.5 9.8 782.4 11.6C784.3 13.4 783.7 15.2 786.3 15.5C788.9 15.8 794.0 14.2 797.9 13.6C801.8 12.9 805.6 11.3 809.5 11.6C813.4 11.9 818.0 13.6 821.2 15.5C824.5 17.4 827.5 20.7 829.0 23.3C830.5 25.9 828.6 28.9 829.9 31.0C831.2 33.1 833.3 35.4 836.7 35.9C840.1 36.4 845.6 34.2 850.3 34.0C855.0 33.8 862.5 41.1 865.0 34.9C867.5 28.7 881.5 3.3 865.0 -3.0C848.5 -9.3 781.0 -4.3 765.9 -3.0Z" fill="#86c7ee" /><polygon points="865.0,131.3 855.7,133.0 850.0,137.8 842.6,144.4 835.0,150.0 831.3,148.0 827.6,141.6 820.0,142.5 810.7,146.3 804.0,152.0 797.5,159.4 790.0,165.0 797.5,167.0 801.3,169.7 788.0,172.5 778.8,173.5 780.7,170.6 777.0,167.0 766.6,166.0 762.0,169.0 748.8,170.3 733.8,169.0 724.4,172.5 715.0,182.0 705.6,195.0 696.9,207.5 687.0,215.0 690.4,218.3 701.2,217.2 709.9,221.5 718.5,229.0 721.8,235.6 718.5,248.6 717.4,261.6 712.0,274.6 705.5,287.6 696.9,300.5 688.2,309.2 675.2,314.6 666.6,316.8 660.0,322.2 653.6,326.5 647.0,335.2 642.8,346.0 643.9,355.0 865.0,355.0" fill="url(#deep)" /><path d="M586.0 355.0C580.2 353.2 586.3 346.7 588.0 344.0C589.7 341.3 592.8 340.0 596.0 339.0C599.2 338.0 603.7 337.4 607.0 338.0C610.3 338.6 613.3 339.7 616.0 342.5C618.7 345.3 628.0 352.9 623.0 355.0C618.0 357.1 591.8 356.8 586.0 355.0Z" fill="#6cb8ea" /><polygon points="35.6,92.3 43.1,94.1 52.5,97.9 53.5,105.4 45.0,109.1 41.3,116.6 33.8,118.5 28.1,127.9 24.4,141.0 22.5,152.3 26.3,159.8 37.5,156.0 46.9,159.8 56.3,160.7 65.7,163.5 75.0,161.7 80.7,163.5 75.0,167.3 61.9,166.3 50.6,167.3 45.0,170.1 41.3,174.8 45.5,181.0 47.6,188.5 45.0,194.0 39.5,193.0 37.0,186.0 38.5,180.4 34.5,176.0 31.5,180.0 30.4,189.6 28.7,200.2 27.9,208.4 24.6,216.6 18.0,221.5 11.3,220.5 3.8,217.0 -3.0,214.0 -3.0,186.0 5.6,178.5 11.3,171.0 15.0,159.8 18.8,146.7 20.6,133.5 24.4,118.5 28.1,105.4 31.9,96.0" fill="#74bfec" /><path d="M73.6 304.9C74.2 299.7 72.9 300.3 75.8 296.2C78.7 292.1 79.2 291.4 84.4 289.7C89.6 288.0 90.6 288.8 95.2 289.7C99.8 290.6 98.8 290.4 101.7 293.0C104.6 295.6 103.1 296.9 106.0 299.5C108.9 302.1 109.4 302.7 112.6 302.7C115.8 302.7 115.7 301.2 118.0 299.5C120.3 297.8 118.6 296.2 121.2 296.2C123.8 296.2 123.1 297.2 127.7 299.5C132.3 301.8 133.3 301.2 138.5 304.9C143.7 308.6 144.3 308.9 147.2 313.5C150.1 318.1 150.5 318.7 149.4 322.2C148.3 325.7 148.1 324.5 142.9 326.5C137.7 328.5 136.8 329.5 129.9 329.8C123.0 330.1 123.8 328.5 116.9 327.6C110.0 326.7 110.8 326.5 103.9 326.5C97.0 326.5 97.3 328.2 90.9 327.6C84.5 327.0 84.6 327.6 80.0 324.4C75.4 321.2 75.3 320.9 73.6 315.7C71.9 310.5 73.0 310.1 73.6 304.9Z" fill="#5fb0e8" /><path d="M110.4 291.9C110.8 290.1 113.7 286.7 116.9 285.4C120.2 284.1 126.3 284.7 129.9 284.3C133.5 283.9 137.4 282.6 138.5 283.2C139.6 283.8 138.2 286.3 136.4 287.6C134.6 288.9 130.2 289.6 127.7 290.8C125.2 292.1 123.4 294.2 121.2 295.1C119.0 296.0 116.5 296.7 114.7 296.2C112.9 295.7 110.0 293.7 110.4 291.9Z" fill="#74bfec" /><path d="M62.0 330.0C63.0 329.2 69.7 328.5 72.0 329.0C74.3 329.5 77.0 332.2 76.0 333.0C75.0 333.8 68.3 334.5 66.0 334.0C63.7 333.5 61.0 330.8 62.0 330.0Z" fill="#74bfec" /><path d="M36.0 340.0C39.7 337.2 48.3 335.5 52.0 338.0C55.7 340.5 61.7 352.2 58.0 355.0C54.3 357.8 33.7 357.5 30.0 355.0C26.3 352.5 32.3 342.8 36.0 340.0Z" fill="#74bfec" /><path d="M179.7 302.7C180.0 296.9 180.0 295.9 184.0 291.9C188.0 287.9 188.5 289.3 194.8 287.6C201.1 285.9 202.9 285.4 207.8 285.4C212.7 285.4 212.3 284.7 213.2 287.6C214.1 290.5 213.0 292.2 211.0 296.2C209.0 300.2 206.2 299.2 205.6 302.7C205.0 306.2 209.2 305.1 208.9 309.2C208.6 313.3 205.9 313.3 204.5 317.9C203.1 322.5 202.6 321.9 203.5 326.5C204.4 331.1 206.1 327.6 207.8 335.2C209.5 342.8 212.3 349.7 210.0 355.0C207.7 360.3 202.3 358.0 199.1 355.0C195.9 352.0 199.1 349.1 198.0 343.8C196.9 338.5 196.8 340.4 194.8 335.2C192.8 330.0 193.7 330.2 190.5 324.4C187.3 318.6 185.8 319.3 182.9 313.5C180.0 307.7 179.4 308.5 179.7 302.7Z" fill="#78c0ec" /><path d="M244.4 296.0C244.7 294.6 246.4 295.0 246.8 296.5C247.2 298.0 247.3 303.6 247.0 305.0C246.7 306.4 245.4 306.5 245.0 305.0C244.6 303.5 244.1 297.4 244.4 296.0Z" fill="#86c7ee" /><path d="M238.0 322.0C238.5 321.3 241.2 320.7 242.0 321.0C242.8 321.3 243.5 323.3 243.0 324.0C242.5 324.7 239.8 325.3 239.0 325.0C238.2 324.7 237.5 322.7 238.0 322.0Z" fill="#86c7ee" /><path d="M212.5 322.0C213.5 320.7 216.8 320.2 218.0 321.0C219.2 321.8 219.8 325.2 219.5 327.0C219.2 328.8 217.2 331.7 216.0 332.0C214.8 332.3 212.6 330.7 212.0 329.0C211.4 327.3 211.5 323.3 212.5 322.0Z" fill="#78c0ec" /><ellipse cx="237" cy="324" rx="1.8" ry="2.6" fill="#78c0ec"/><path d="M243.0 287.0C243.3 285.5 247.5 284.2 249.0 285.0C250.5 285.8 252.3 290.5 252.0 292.0C251.7 293.5 248.5 294.8 247.0 294.0C245.5 293.2 242.7 288.5 243.0 287.0Z" fill="#78c0ec" /><path d="M331.1 296.2C331.1 294.6 331.1 290.2 333.3 288.6C335.5 287.0 340.5 286.7 344.1 286.5C347.7 286.3 351.6 287.6 354.9 287.6C358.1 287.6 362.3 286.3 363.6 286.5C364.9 286.7 364.3 288.1 362.5 288.6C360.7 289.1 355.9 289.5 352.8 289.7C349.7 289.9 346.8 289.1 344.1 289.7C341.4 290.2 338.3 291.6 336.5 293.0C334.7 294.4 334.2 297.9 333.3 298.4C332.4 298.9 331.1 297.8 331.1 296.2Z" fill="#78c0ec" /><ellipse cx="352" cy="320" rx="5" ry="2" fill="#78c0ec"/><circle cx="376.6" cy="290.8" r="2" fill="#78c0ec"/><ellipse cx="390" cy="275.5" rx="4.5" ry="2" fill="#78c0ec" transform="rotate(-15 390 275.5)"/><path d="M540.0 207.0C540.5 208.2 541.9 211.0 541.0 214.0C540.1 217.0 537.1 221.6 534.6 224.8C532.1 228.0 528.9 230.5 526.0 233.4C523.1 236.3 520.4 239.9 517.3 242.0C514.2 244.1 509.3 245.7 507.5 246.0C505.7 246.3 505.2 245.0 506.5 243.8C507.8 242.6 512.3 241.2 515.0 238.9C517.7 236.6 520.2 233.1 522.7 230.2C525.2 227.3 528.1 224.6 530.3 221.5C532.5 218.4 534.5 214.2 535.7 211.8C537.0 209.4 537.1 207.8 537.8 207.0C538.5 206.2 539.5 205.8 540.0 207.0Z" fill="#78b8ec" /><ellipse cx="486.5" cy="249.5" rx="1.6" ry="4.5" fill="#78c0ec"/><ellipse cx="442" cy="256.5" rx="3" ry="2.6" fill="#78c0ec"/><ellipse cx="88.2" cy="150" rx="7.5" ry="6" fill="#80c4ee"/><ellipse cx="111.6" cy="146" rx="3.6" ry="6.5" fill="#80c4ee" transform="rotate(-35 111.6 146)"/><circle cx="128" cy="179" r="3" fill="#80c4ee"/><ellipse cx="48" cy="152" rx="2" ry="1.5" fill="#80c4ee"/><circle cx="670.5" cy="300.5" r="2.2" fill="#78c0ec"/></g>
<g filter="url(#coast)"><polygon points="205.7,-3.0 209.5,7.8 217.3,15.5 229.0,20.4 238.6,18.4 232.8,11.6 229.0,3.9 227.0,-3.0" fill="#f6f8f7" /><polygon points="124.5,88.7 138.5,86.6 150.0,87.7 143.5,94.2 134.2,95.2 127.7,101.7 123.4,101.7" fill="#addcab" /><polygon points="98.0,291.0 106.0,289.5 112.0,292.0 118.5,296.5 112.0,299.0 107.0,303.0 101.0,300.0 97.0,296.0" fill="#e2edd2" /><ellipse cx="36.5" cy="179" rx="3.4" ry="1.5" fill="#b8e2bb" transform="rotate(-25 36.5 179)"/><ellipse cx="37.5" cy="174.6" rx="1.8" ry="1.2" fill="#b8e2bb"/><ellipse cx="14.8" cy="189.5" rx="1.4" ry="4.6" fill="#b8e2bb" transform="rotate(25 14.8 189.5)"/><ellipse cx="191" cy="44.2" rx="6" ry="6.3" fill="#f6f8f7"/><polygon points="865.0,136.9 850.0,148.0 842.6,155.6 835.0,165.0 827.6,174.4 816.3,183.8 810.7,187.5 807.0,197.0 805.0,208.2 806.0,221.3 807.9,236.3 809.7,249.4 801.3,258.8 806.0,256.0 812.5,249.4 820.0,240.0 831.3,228.8 838.8,219.4 840.7,212.0 846.3,204.4 848.2,197.0 844.4,191.3 848.2,185.7 855.7,180.0 865.0,176.3" fill="#c4e6c8" /><path d="M858.0 150.0C855.3 151.2 849.7 159.7 846.0 165.0C842.3 170.3 839.3 176.2 836.0 182.0C832.7 187.8 828.7 194.5 826.0 200.0C823.3 205.5 820.3 212.0 820.0 215.0C819.7 218.0 822.0 219.8 824.0 218.0C826.0 216.2 829.0 209.3 832.0 204.0C835.0 198.7 838.7 191.7 842.0 186.0C845.3 180.3 848.7 174.7 852.0 170.0C855.3 165.3 861.0 161.3 862.0 158.0C863.0 154.7 860.7 148.8 858.0 150.0Z" fill="#f6f8f7" opacity="0.9"/><path d="M729.4 220.5C730.4 220.8 732.3 226.8 733.0 230.0C733.7 233.2 733.2 235.5 733.7 240.0C734.2 244.5 734.8 252.2 735.8 257.0C736.8 261.8 740.5 267.2 740.0 269.0C739.5 270.8 734.4 267.4 733.0 268.0C731.6 268.6 731.2 269.1 731.5 272.4C731.8 275.7 735.2 284.2 734.8 287.6C734.4 291.0 730.5 293.6 729.0 293.0C727.5 292.4 726.3 287.4 726.0 284.0C725.7 280.6 727.2 276.9 727.0 272.4C726.8 267.9 725.5 262.4 725.0 257.0C724.5 251.6 723.7 244.8 724.0 240.0C724.3 235.2 726.1 231.2 727.0 228.0C727.9 224.8 728.4 220.2 729.4 220.5Z" fill="#bfe4c0" /><polygon points="724.0,297.3 731.5,300.5 740.0,307.0 746.7,305.0 751.0,307.0 742.3,313.5 735.8,317.9 731.5,323.3 722.9,320.0 716.4,324.4 712.0,322.2 718.5,315.7 720.7,307.0" fill="#c4e6c4" /><polygon points="714.2,326.5 722.9,327.6 727.2,335.2 725.0,355.0 712.0,355.0 715.3,339.5" fill="#c4e6c4" /><ellipse cx="760" cy="300" rx="2.6" ry="1" fill="#cfe8f6" opacity="0.5" transform="rotate(-40 760 300)"/><ellipse cx="771" cy="292" rx="2.6" ry="1" fill="#cfe8f6" opacity="0.5" transform="rotate(-40 771 292)"/><ellipse cx="784" cy="282" rx="2.6" ry="1" fill="#cfe8f6" opacity="0.5" transform="rotate(-40 784 282)"/><ellipse cx="793" cy="270" rx="2.6" ry="1" fill="#cfe8f6" opacity="0.5" transform="rotate(-40 793 270)"/><ellipse cx="799" cy="262" rx="2.6" ry="1" fill="#cfe8f6" opacity="0.5" transform="rotate(-40 799 262)"/></g>
<g opacity="0.75"><path d="M322.0 84.0C321.3 86.7 320.8 94.3 318.0 100.0C315.2 105.7 308.3 111.3 305.0 118.0C301.7 124.7 297.5 133.3 298.0 140.0C298.5 146.7 304.0 152.0 308.0 158.0C312.0 164.0 317.0 169.7 322.0 176.0C327.0 182.3 333.0 190.0 338.0 196.0C343.0 202.0 346.3 207.7 352.0 212.0C357.7 216.3 365.3 218.7 372.0 222.0C378.7 225.3 388.7 230.3 392.0 232.0" fill="none" stroke="#7fb6e6" stroke-width="0.6" stroke-linecap="round"/><path d="M308.0 158.0C305.0 161.0 295.3 169.7 290.0 176.0C284.7 182.3 280.7 190.0 276.0 196.0C271.3 202.0 263.0 205.3 262.0 212.0C261.0 218.7 263.7 229.7 270.0 236.0C276.3 242.3 290.0 245.7 300.0 250.0C310.0 254.3 325.0 260.0 330.0 262.0" fill="none" stroke="#7fb6e6" stroke-width="0.6" stroke-linecap="round"/><path d="M386.0 28.0C387.0 31.7 390.0 41.3 392.0 50.0C394.0 58.7 396.0 70.0 398.0 80.0C400.0 90.0 401.7 100.0 404.0 110.0C406.3 120.0 408.7 131.0 412.0 140.0C415.3 149.0 420.0 155.7 424.0 164.0C428.0 172.3 433.3 182.7 436.0 190.0C438.7 197.3 438.3 202.0 440.0 208.0C441.7 214.0 445.0 223.0 446.0 226.0" fill="none" stroke="#7fb6e6" stroke-width="0.6" stroke-linecap="round"/><path d="M424.0 164.0C428.3 163.3 440.7 159.3 450.0 160.0C459.3 160.7 470.3 164.3 480.0 168.0C489.7 171.7 501.3 176.0 508.0 182.0C514.7 188.0 516.3 198.0 520.0 204.0C523.7 210.0 528.3 215.7 530.0 218.0" fill="none" stroke="#7fb6e6" stroke-width="0.6" stroke-linecap="round"/><path d="M616.0 20.0C615.3 23.3 611.7 31.7 612.0 40.0C612.3 48.3 615.3 60.0 618.0 70.0C620.7 80.0 624.3 90.3 628.0 100.0C631.7 109.7 634.7 119.7 640.0 128.0C645.3 136.3 654.0 144.7 660.0 150.0C666.0 155.3 673.3 158.3 676.0 160.0" fill="none" stroke="#7fb6e6" stroke-width="0.6" stroke-linecap="round"/><path d="M640.0 128.0C635.0 130.0 620.0 136.0 610.0 140.0C600.0 144.0 589.0 147.0 580.0 152.0C571.0 157.0 561.3 162.7 556.0 170.0C550.7 177.3 547.3 188.7 548.0 196.0C548.7 203.3 558.0 211.0 560.0 214.0" fill="none" stroke="#7fb6e6" stroke-width="0.6" stroke-linecap="round"/><path d="M640.0 128.0C633.3 126.3 613.3 120.7 600.0 118.0C586.7 115.3 573.3 114.3 560.0 112.0C546.7 109.7 526.7 105.3 520.0 104.0" fill="none" stroke="#7fb6e6" stroke-width="0.6" stroke-linecap="round"/><path d="M676.0 160.0C674.7 163.3 672.3 174.0 668.0 180.0C663.7 186.0 654.7 190.3 650.0 196.0C645.3 201.7 641.7 211.0 640.0 214.0" fill="none" stroke="#7fb6e6" stroke-width="0.6" stroke-linecap="round"/><path d="M100.0 196.0C103.3 195.0 113.3 189.3 120.0 190.0C126.7 190.7 133.3 197.7 140.0 200.0C146.7 202.3 154.0 201.7 160.0 204.0C166.0 206.3 172.0 209.3 176.0 214.0C180.0 218.7 184.7 226.3 184.0 232.0C183.3 237.7 174.7 242.0 172.0 248.0C169.3 254.0 166.0 261.3 168.0 268.0C170.0 274.7 181.3 284.7 184.0 288.0" fill="none" stroke="#7fb6e6" stroke-width="0.6" stroke-linecap="round"/><path d="M176.0 214.0C179.3 212.7 189.7 209.7 196.0 206.0C202.3 202.3 208.7 195.3 214.0 192.0C219.3 188.7 225.7 187.0 228.0 186.0" fill="none" stroke="#7fb6e6" stroke-width="0.6" stroke-linecap="round"/><path d="M141.0 104.0C142.8 106.7 147.8 115.0 152.0 120.0C156.2 125.0 161.3 129.7 166.0 134.0C170.7 138.3 177.7 144.0 180.0 146.0" fill="none" stroke="#7fb6e6" stroke-width="0.6" stroke-linecap="round"/><path d="M250.0 54.0C249.3 57.7 247.7 69.0 246.0 76.0C244.3 83.0 240.3 90.0 240.0 96.0C239.7 102.0 243.3 109.3 244.0 112.0" fill="none" stroke="#7fb6e6" stroke-width="0.6" stroke-linecap="round"/><path d="M130.0 226.0C130.7 229.3 134.3 240.0 134.0 246.0C133.7 252.0 128.0 256.0 128.0 262.0C128.0 268.0 133.0 278.7 134.0 282.0" fill="none" stroke="#7fb6e6" stroke-width="0.6" stroke-linecap="round"/><path d="M84.0 240.0C85.0 243.0 87.3 252.3 90.0 258.0C92.7 263.7 99.0 268.7 100.0 274.0C101.0 279.3 96.7 287.3 96.0 290.0" fill="none" stroke="#7fb6e6" stroke-width="0.6" stroke-linecap="round"/><path d="M735.0 90.0C736.2 85.0 740.2 70.0 742.0 60.0C743.8 50.0 744.0 38.3 746.0 30.0C748.0 21.7 752.7 13.3 754.0 10.0" fill="none" stroke="#7fb6e6" stroke-width="0.6" stroke-linecap="round"/><path d="M800.0 130.0C801.0 125.0 804.0 110.0 806.0 100.0C808.0 90.0 812.3 80.0 812.0 70.0C811.7 60.0 806.0 49.0 804.0 40.0C802.0 31.0 800.7 20.0 800.0 16.0" fill="none" stroke="#7fb6e6" stroke-width="0.6" stroke-linecap="round"/><path d="M596.0 262.0C600.0 261.0 611.0 256.0 620.0 256.0C629.0 256.0 640.0 262.0 650.0 262.0C660.0 262.0 671.7 259.7 680.0 256.0C688.3 252.3 694.7 245.0 700.0 240.0C705.3 235.0 710.0 228.3 712.0 226.0" fill="none" stroke="#7fb6e6" stroke-width="0.6" stroke-linecap="round"/><path d="M214.0 286.0C214.7 282.3 215.0 269.7 218.0 264.0C221.0 258.3 227.0 255.3 232.0 252.0C237.0 248.7 245.3 245.3 248.0 244.0" fill="none" stroke="#7fb6e6" stroke-width="0.6" stroke-linecap="round"/></g>
<line x1="0" y1="81.6" x2="859.5" y2="81.6" stroke="#5a5a6a" stroke-width="0.9" stroke-dasharray="0.9 3.45" opacity="0.85"/>
<g font-family="'Liberation Sans',sans-serif" opacity="0.9"><circle cx="97.4" cy="45.8" r="1.1" fill="#fff" stroke="#555" stroke-width="0.5"/><text x="97.4" y="42.599999999999994" font-size="5.6" fill="#4a4a4a" text-anchor="middle"  >Мурманск</text><circle cx="140.5" cy="108" r="1.1" fill="#fff" stroke="#555" stroke-width="0.5"/><text x="140.5" y="104.8" font-size="5.6" fill="#4a4a4a" text-anchor="middle"  >Архангельск</text><circle cx="276" cy="68.5" r="1.1" fill="#fff" stroke="#555" stroke-width="0.5"/><text x="276" y="65.3" font-size="5.6" fill="#4a4a4a" text-anchor="middle"  >Воркута</text><circle cx="415" cy="40" r="1.1" fill="#fff" stroke="#555" stroke-width="0.5"/><text x="415" y="36.8" font-size="5.6" fill="#4a4a4a" text-anchor="middle"  >Норильск</text><circle cx="105" cy="142" r="1.1" fill="#fff" stroke="#555" stroke-width="0.5"/><text x="105" y="138.8" font-size="5.6" fill="#4a4a4a" text-anchor="middle"  >Петрозаводск</text><circle cx="82" cy="163" r="1.1" fill="#fff" stroke="#555" stroke-width="0.5"/><text x="82" y="159.8" font-size="5.6" fill="#4a4a4a" text-anchor="middle"  >Санкт-Петербург</text><circle cx="51.3" cy="160.4" r="1.1" fill="#fff" stroke="#555" stroke-width="0.5"/><text x="49.4" y="158.6" font-size="5" fill="#4a4a4a" text-anchor="end"  >Хельсинки</text><circle cx="11.5" cy="169.5" r="1.1" fill="#fff" stroke="#555" stroke-width="0.5"/><text x="11.5" y="166.3" font-size="5" fill="#4a4a4a" text-anchor="middle"  >Стокгольм</text><circle cx="200.3" cy="143.5" r="1.1" fill="#fff" stroke="#555" stroke-width="0.5"/><text x="200.3" y="140.3" font-size="5.6" fill="#4a4a4a" text-anchor="middle"  >Сыктывкар</text><circle cx="123.8" cy="206.3" r="1.1" fill="#fff" stroke="#555" stroke-width="0.5"/><text x="123.8" y="202.5" font-size="6.8" fill="#4a4a4a" text-anchor="middle"  >Москва</text><circle cx="190" cy="206" r="1.1" fill="#fff" stroke="#555" stroke-width="0.5"/><text x="190" y="202.8" font-size="5.6" fill="#4a4a4a" text-anchor="middle"  >Казань</text><circle cx="231" cy="183.5" r="1.1" fill="#fff" stroke="#555" stroke-width="0.5"/><text x="231" y="180.3" font-size="5.6" fill="#4a4a4a" text-anchor="middle"  >Пермь</text><circle cx="256" cy="196" r="1.1" fill="#fff" stroke="#555" stroke-width="0.5"/><text x="256" y="192.8" font-size="5.6" fill="#4a4a4a" text-anchor="middle"  >Екатеринбург</text><circle cx="285" cy="188" r="1.1" fill="#fff" stroke="#555" stroke-width="0.5"/><text x="285" y="184.8" font-size="5.6" fill="#4a4a4a" text-anchor="middle"  >Тюмень</text><circle cx="261" cy="212" r="1.1" fill="#fff" stroke="#555" stroke-width="0.5"/><text x="261" y="208.8" font-size="5.6" fill="#4a4a4a" text-anchor="middle"  >Челябинск</text><circle cx="229.5" cy="216.5" r="1.1" fill="#fff" stroke="#555" stroke-width="0.5"/><text x="229.5" y="213.3" font-size="5.6" fill="#4a4a4a" text-anchor="middle"  >Уфа</text><circle cx="196" cy="231" r="1.1" fill="#fff" stroke="#555" stroke-width="0.5"/><text x="196" y="227.8" font-size="5.6" fill="#4a4a4a" text-anchor="middle"  >Самара</text><circle cx="133" cy="244.5" r="1.1" fill="#fff" stroke="#555" stroke-width="0.5"/><text x="133" y="241.3" font-size="5.6" fill="#4a4a4a" text-anchor="middle"  >Воронеж</text><circle cx="116" cy="259" r="1.1" fill="#fff" stroke="#555" stroke-width="0.5"/><text x="116" y="255.8" font-size="5.6" fill="#4a4a4a" text-anchor="middle"  >Харьков</text><circle cx="109" cy="272" r="1.1" fill="#fff" stroke="#555" stroke-width="0.5"/><text x="109" y="268.8" font-size="5.6" fill="#4a4a4a" text-anchor="middle"  >Днепр</text><circle cx="136" cy="282.5" r="1.1" fill="#fff" stroke="#555" stroke-width="0.5"/><text x="136" y="279.3" font-size="5.6" fill="#4a4a4a" text-anchor="middle"  >Ростов-на-Дону</text><circle cx="164" cy="270" r="1.1" fill="#fff" stroke="#555" stroke-width="0.5"/><text x="164" y="266.8" font-size="5.6" fill="#4a4a4a" text-anchor="middle"  >Волгоград</text><circle cx="132" cy="300" r="1.1" fill="#fff" stroke="#555" stroke-width="0.5"/><text x="132" y="296.8" font-size="5.6" fill="#4a4a4a" text-anchor="middle"  >Краснодар</text><circle cx="181.5" cy="316" r="1.1" fill="#fff" stroke="#555" stroke-width="0.5"/><text x="181.5" y="312.8" font-size="5.6" fill="#4a4a4a" text-anchor="middle"  >Махачкала</text><circle cx="165.5" cy="325.5" r="1.1" fill="#fff" stroke="#555" stroke-width="0.5"/><text x="165.5" y="322.3" font-size="5.6" fill="#4a4a4a" text-anchor="middle"  >Тбилиси</text><circle cx="163.5" cy="336.5" r="1.1" fill="#fff" stroke="#555" stroke-width="0.5"/><text x="163.5" y="333.3" font-size="5.6" fill="#4a4a4a" text-anchor="middle"  >Ереван</text><circle cx="194.5" cy="335.5" r="1.1" fill="#fff" stroke="#555" stroke-width="0.5"/><text x="194.5" y="332.3" font-size="5.6" fill="#4a4a4a" text-anchor="middle"  >Баку</text><circle cx="329.5" cy="214" r="1.1" fill="#fff" stroke="#555" stroke-width="0.5"/><text x="329.5" y="210.8" font-size="5.6" fill="#4a4a4a" text-anchor="middle"  >Омск</text><circle cx="385" cy="214" r="1.1" fill="#fff" stroke="#555" stroke-width="0.5"/><text x="385" y="210.8" font-size="5.6" fill="#4a4a4a" text-anchor="middle"  >Новосибирск</text><circle cx="442" cy="204" r="1.1" fill="#fff" stroke="#555" stroke-width="0.5"/><text x="442" y="200.8" font-size="5.6" fill="#4a4a4a" text-anchor="middle"  >Красноярск</text><circle cx="508" cy="239.5" r="1.1" fill="#fff" stroke="#555" stroke-width="0.5"/><text x="508" y="236.3" font-size="5.6" fill="#4a4a4a" text-anchor="middle"  >Иркутск</text><circle cx="527" cy="243" r="1.1" fill="#fff" stroke="#555" stroke-width="0.5"/><text x="527" y="248.8" font-size="5.6" fill="#4a4a4a" text-anchor="middle"  >Улан-Удэ</text><circle cx="561.5" cy="241.5" r="1.1" fill="#fff" stroke="#555" stroke-width="0.5"/><text x="561.5" y="238.3" font-size="5.6" fill="#4a4a4a" text-anchor="middle"  >Чита</text><circle cx="523.5" cy="277" r="1.1" fill="#fff" stroke="#555" stroke-width="0.5"/><text x="523.5" y="273.8" font-size="5.6" fill="#4a4a4a" text-anchor="middle"  >Улан-Батор</text><circle cx="318.5" cy="249.5" r="1.1" fill="#fff" stroke="#555" stroke-width="0.5"/><text x="318.5" y="246.3" font-size="5.6" fill="#4a4a4a" text-anchor="middle"  >Астана</text><circle cx="350.5" cy="314" r="1.1" fill="#fff" stroke="#555" stroke-width="0.5"/><text x="350.5" y="310.8" font-size="5.6" fill="#4a4a4a" text-anchor="middle"  >Алматы</text><circle cx="306" cy="328.5" r="1.1" fill="#fff" stroke="#555" stroke-width="0.5"/><text x="306" y="325.3" font-size="5.6" fill="#4a4a4a" text-anchor="middle"  >Ташкент</text><circle cx="303.5" cy="348" r="1.1" fill="#fff" stroke="#555" stroke-width="0.5"/><text x="303.5" y="344.8" font-size="5.6" fill="#4a4a4a" text-anchor="middle"  >Душанбе</text><circle cx="653" cy="139" r="1.1" fill="#fff" stroke="#555" stroke-width="0.5"/><text x="653" y="135.8" font-size="5.6" fill="#4a4a4a" text-anchor="middle"  >Якутск</text><circle cx="776" cy="167" r="1.1" fill="#fff" stroke="#555" stroke-width="0.5"/><text x="776" y="163.8" font-size="5.6" fill="#4a4a4a" text-anchor="middle"  >Магадан</text><circle cx="821" cy="232.5" r="1.1" fill="#fff" stroke="#555" stroke-width="0.5"/><text x="821" y="223.9" font-size="5.6" fill="#4a4a4a" text-anchor="middle"  >Петропавловск-</text><text x="821" y="229.6" font-size="5.6" fill="#4a4a4a" text-anchor="middle"  >Камчатский</text><circle cx="642.5" cy="257.5" r="1.1" fill="#fff" stroke="#555" stroke-width="0.5"/><text x="642.5" y="254.3" font-size="5.6" fill="#4a4a4a" text-anchor="middle"  >Благовещенск</text><circle cx="686" cy="272.5" r="1.1" fill="#fff" stroke="#555" stroke-width="0.5"/><text x="686" y="269.3" font-size="5.6" fill="#4a4a4a" text-anchor="middle"  >Хабаровск</text><circle cx="667.5" cy="315" r="1.1" fill="#fff" stroke="#555" stroke-width="0.5"/><text x="667.5" y="311.8" font-size="5.6" fill="#4a4a4a" text-anchor="middle"  >Владивосток</text><circle cx="578" cy="338.3" r="1.1" fill="#fff" stroke="#555" stroke-width="0.5"/><text x="578" y="335.1" font-size="5.6" fill="#4a4a4a" text-anchor="middle"  >Пекин</text><circle cx="25.5" cy="216.5" r="1.1" fill="#fff" stroke="#555" stroke-width="0.5"/><text x="25.5" y="213.3" font-size="5" fill="#4a4a4a" text-anchor="middle"  >Калининград</text><circle cx="66.5" cy="224.5" r="1.1" fill="#fff" stroke="#555" stroke-width="0.5"/><text x="66.5" y="221.3" font-size="5" fill="#4a4a4a" text-anchor="middle"  >Минск</text><circle cx="28" cy="239.5" r="1.1" fill="#fff" stroke="#555" stroke-width="0.5"/><text x="28" y="236.3" font-size="5" fill="#4a4a4a" text-anchor="middle"  >Варшава</text><circle cx="83.5" cy="255.5" r="1.1" fill="#fff" stroke="#555" stroke-width="0.5"/><text x="83.5" y="252.3" font-size="5" fill="#4a4a4a" text-anchor="middle"  >Киев</text><circle cx="45.5" cy="260.5" r="1.1" fill="#fff" stroke="#555" stroke-width="0.5"/><text x="45.5" y="257.3" font-size="5" fill="#4a4a4a" text-anchor="middle"  >Львов</text><circle cx="84.5" cy="288.5" r="1.1" fill="#fff" stroke="#555" stroke-width="0.5"/><text x="84.5" y="285.3" font-size="5" fill="#4a4a4a" text-anchor="middle"  >Одесса</text><circle cx="17" cy="280.5" r="1.1" fill="#fff" stroke="#555" stroke-width="0.5"/><text x="17" y="277.3" font-size="5" fill="#4a4a4a" text-anchor="middle"  >Будапешт</text><circle cx="25.5" cy="301" r="1.1" fill="#fff" stroke="#555" stroke-width="0.5"/><text x="25.5" y="297.8" font-size="5" fill="#4a4a4a" text-anchor="middle"  >Белград</text><circle cx="57.5" cy="304.5" r="1.1" fill="#fff" stroke="#555" stroke-width="0.5"/><text x="57.5" y="301.3" font-size="5" fill="#4a4a4a" text-anchor="middle"  >Бухарест</text><circle cx="41.5" cy="317.5" r="1.1" fill="#fff" stroke="#555" stroke-width="0.5"/><text x="41.5" y="314.3" font-size="5" fill="#4a4a4a" text-anchor="middle"  >София</text><circle cx="74" cy="330" r="1.1" fill="#fff" stroke="#555" stroke-width="0.5"/><text x="74" y="326.8" font-size="5.4" fill="#4a4a4a" text-anchor="middle"  >Стамбул</text><circle cx="100" cy="339" r="1.1" fill="#fff" stroke="#555" stroke-width="0.5"/><text x="100" y="335.8" font-size="5" fill="#4a4a4a" text-anchor="middle"  >Анкара</text><text x="222" y="32" font-size="6.4" fill="#4a67b0" text-anchor="middle" font-style="italic" >Печорское</text><text x="222" y="39.5" font-size="6.4" fill="#4a67b0" text-anchor="middle" font-style="italic" >море</text><text x="770" y="234" font-size="6.4" fill="#3a6fc0" text-anchor="middle" font-style="italic" >Охотское</text><text x="770" y="241.5" font-size="6.4" fill="#3a6fc0" text-anchor="middle" font-style="italic" >море</text><text x="681" y="334.5" font-size="6" fill="#3a6fc0" text-anchor="middle" font-style="italic" >Японское</text><text x="681" y="341" font-size="6" fill="#3a6fc0" text-anchor="middle" font-style="italic" >море/Восточное</text><text x="681" y="347.5" font-size="6" fill="#3a6fc0" text-anchor="middle" font-style="italic" >море</text><text x="366" y="140.5" font-size="6.6" fill="#a88294" text-anchor="middle" font-style="italic" letter-spacing="1">Западно-</text><text x="366" y="148" font-size="6.6" fill="#a88294" text-anchor="middle" font-style="italic" letter-spacing="1">Сибирская</text><text x="366" y="155.5" font-size="6.6" fill="#a88294" text-anchor="middle" font-style="italic" letter-spacing="1">равнина</text><text x="481" y="144.5" font-size="5" fill="#bb94a2" text-anchor="middle"  letter-spacing="0.6">РОССИЯ</text><text x="60" y="131.5" font-size="5" fill="#c07aa0" text-anchor="middle"  letter-spacing="0.6">ФИНЛЯНДИЯ</text><text x="56" y="179.6" font-size="4.6" fill="#c08aa8" text-anchor="middle"  letter-spacing="0.5">ЭСТОНИЯ</text><text x="57" y="197.2" font-size="4.6" fill="#9ab09a" text-anchor="middle"  letter-spacing="0.5">ЛАТВИЯ</text><text x="66" y="235" font-size="5" fill="#8aa08a" text-anchor="middle"  letter-spacing="0.6">БЕЛАРУСЬ</text><text x="76" y="268.5" font-size="5" fill="#8aa08a" text-anchor="middle"  letter-spacing="0.6">УКРАИНА</text><text x="14" y="287.5" font-size="4.6" fill="#8aa08a" text-anchor="middle"  letter-spacing="0.5">ВЕНГРИЯ</text><text x="48" y="289.5" font-size="4.6" fill="#8aa08a" text-anchor="middle"  letter-spacing="0.5">РУМЫНИЯ</text><text x="19" y="311.5" font-size="4.6" fill="#8aa08a" text-anchor="middle"  letter-spacing="0.5">СЕРБИЯ</text><text x="66" y="316.5" font-size="4.6" fill="#8aa08a" text-anchor="middle"  letter-spacing="0.5">БОЛГАРИЯ</text><text x="297" y="276" font-size="5" fill="#8f8f8f" text-anchor="middle"  letter-spacing="0.6">КАЗАХСТАН</text><text x="284" y="326" font-size="5" fill="#8f8f8f" text-anchor="middle"  letter-spacing="0.6">УЗБЕКИСТАН</text><text x="337" y="325" font-size="4.6" fill="#8f8f8f" text-anchor="middle"  letter-spacing="0.4">КЫРГЫЗСТАН</text><text x="506" y="297.5" font-size="5" fill="#8f8f8f" text-anchor="middle"  letter-spacing="0.6">МОНГОЛИЯ</text><text x="497" y="327" font-size="7" fill="#8a8a8a" text-anchor="middle" font-style="italic" letter-spacing="0.8">Гоби</text><text x="389" y="319.5" font-size="6.4" fill="#8a8a8a" text-anchor="middle" font-style="italic" >Т я н ь</text><text x="431" y="313.5" font-size="6.4" fill="#8a8a8a" text-anchor="middle" font-style="italic" >Ш а н ь</text><text x="731" y="262" font-size="6" fill="#c08a7a" text-anchor="middle"  letter-spacing="0.5">Сахалин</text><text x="730" y="314.5" font-size="5.6" fill="#c08a7a" text-anchor="middle" font-style="italic" letter-spacing="0.5">Хоккайдо</text><text x="148" y="312.5" font-size="4.6" fill="#666" text-anchor="middle"  >Эльбрус</text><text x="148" y="317.5" font-size="4.6" fill="#666" text-anchor="middle"  >5642 м</text><text x="640" y="338" font-size="4.6" fill="#8aa08a" text-anchor="middle"  >КНДР</text><text x="243.5" y="350" font-size="5" fill="#4a4a4a" text-anchor="middle"  >Ашхабад</text><text x="43" y="349.6" font-size="5" fill="#4a4a4a" text-anchor="middle"  >Афины</text><text x="580" y="349.6" font-size="5" fill="#4a4a4a" text-anchor="middle"  >Тяньцзинь</text><text x="655" y="349" font-size="5" fill="#4a4a4a" text-anchor="middle"  >Сеул</text><text x="158.5" y="166" font-size="4.8" fill="#4a6fc0" font-style="italic" text-anchor="middle" transform="rotate(-35 158.5 166)">р. Сухона</text><text x="176" y="175" font-size="4.8" fill="#4a6fc0" font-style="italic" text-anchor="middle" transform="rotate(-15 176 175)">р. Ветлуга</text><text x="98" y="199" font-size="4.8" fill="#4a6fc0" font-style="italic" text-anchor="middle" transform="rotate(30 98 199)">р. Волга</text><text x="160" y="203" font-size="4.8" fill="#4a6fc0" font-style="italic" text-anchor="middle" transform="rotate(25 160 203)">р. Волга</text><text x="170" y="137" font-size="4.8" fill="#4a6fc0" font-style="italic" text-anchor="middle" transform="rotate(45 170 137)">р. Северная Двина</text><text x="243" y="101" font-size="4.8" fill="#4a6fc0" font-style="italic" text-anchor="middle" transform="rotate(80 243 101)">р. Печора</text><text x="134" y="234" font-size="4.8" fill="#4a6fc0" font-style="italic" text-anchor="middle" transform="rotate(70 134 234)">р. Дон</text><text x="196" y="209" font-size="4.8" fill="#4a6fc0" font-style="italic" text-anchor="middle" transform="rotate(-25 196 209)">р. Кама</text><text x="221" y="251" font-size="4.8" fill="#4a6fc0" font-style="italic" text-anchor="middle" transform="rotate(-15 221 251)">р. Урал</text><text x="247" y="249" font-size="4.8" fill="#4a6fc0" font-style="italic" text-anchor="middle" transform="rotate(-25 247 249)">р. Урал</text><text x="200" y="266" font-size="4.8" fill="#4a6fc0" font-style="italic" text-anchor="middle" transform="rotate(80 200 266)">р. Урал</text><text x="287" y="218" font-size="4.8" fill="#4a6fc0" font-style="italic" text-anchor="middle" transform="rotate(-70 287 218)">р. Тобол</text><text x="294" y="138" font-size="4.8" fill="#4a6fc0" font-style="italic" text-anchor="middle" transform="rotate(55 294 138)">р. Обь</text><text x="368" y="252" font-size="4.8" fill="#4a6fc0" font-style="italic" text-anchor="middle" transform="rotate(20 368 252)">р. Иртыш</text><text x="418" y="232" font-size="4.8" fill="#4a6fc0" font-style="italic" text-anchor="middle" transform="rotate(20 418 232)">р. Томь</text><text x="409" y="255" font-size="4.8" fill="#4a6fc0" font-style="italic" text-anchor="middle" transform="rotate(-80 409 255)">р. Катунь</text><text x="408" y="55" font-size="4.8" fill="#4a6fc0" font-style="italic" text-anchor="middle" transform="rotate(85 408 55)">р. Енисей</text><text x="422" y="128" font-size="4.8" fill="#4a6fc0" font-style="italic" text-anchor="middle" transform="rotate(70 422 128)">р. Енисей</text><text x="367" y="70" font-size="4.8" fill="#4a6fc0" font-style="italic" text-anchor="middle" transform="rotate(20 367 70)">р. Таз</text><text x="512" y="96" font-size="4.8" fill="#4a6fc0" font-style="italic" text-anchor="middle" transform="rotate(20 512 96)">р. Вилюй</text><text x="515" y="117" font-size="4.8" fill="#4a6fc0" font-style="italic" text-anchor="middle" transform="rotate(18 515 117)">р. Нижняя Тунгуска</text><text x="601" y="102" font-size="4.8" fill="#4a6fc0" font-style="italic" text-anchor="middle" transform="rotate(80 601 102)">р. Тюкян</text><text x="606" y="126" font-size="4.8" fill="#4a6fc0" font-style="italic" text-anchor="middle" transform="rotate(-25 606 126)">р. Вилюй</text><text x="623" y="63" font-size="4.8" fill="#4a6fc0" font-style="italic" text-anchor="middle" transform="rotate(-75 623 63)">р. Лена</text><text x="501" y="187" font-size="4.8" fill="#4a6fc0" font-style="italic" text-anchor="middle" transform="rotate(-75 501 187)">р. Ангара</text><text x="548" y="185" font-size="4.8" fill="#4a6fc0" font-style="italic" text-anchor="middle" transform="rotate(-35 548 185)">р. Лена</text><text x="651" y="150" font-size="4.8" fill="#4a6fc0" font-style="italic" text-anchor="middle" transform="rotate(-20 651 150)">Лена</text><text x="664" y="170" font-size="4.8" fill="#4a6fc0" font-style="italic" text-anchor="middle" transform="rotate(-35 664 170)">р. Алдан</text><text x="666" y="198" font-size="4.8" fill="#4a6fc0" font-style="italic" text-anchor="middle" transform="rotate(35 666 198)">р. Учур</text><text x="616" y="225" font-size="4.8" fill="#4a6fc0" font-style="italic" text-anchor="middle" transform="rotate(10 616 225)">р. Амур</text><text x="599" y="250" font-size="4.8" fill="#4a6fc0" font-style="italic" text-anchor="middle" transform="rotate(-65 599 250)">р. Аргунь</text><text x="505" y="259" font-size="4.8" fill="#4a6fc0" font-style="italic" text-anchor="middle" transform="rotate(-25 505 259)">р. Селенга</text><text x="729" y="78" font-size="4.8" fill="#4a6fc0" font-style="italic" text-anchor="middle" transform="rotate(-85 729 78)">р. Индигирка</text><text x="794" y="124" font-size="4.8" fill="#4a6fc0" font-style="italic" text-anchor="middle" transform="rotate(-60 794 124)">р. Колыма</text><text x="826" y="205" font-size="4.8" fill="#4a6fc0" font-style="italic" text-anchor="middle" transform="rotate(-45 826 205)">р. Камчатка</text><text x="395" y="335.5" font-size="4.8" fill="#4a6fc0" font-style="italic" text-anchor="middle" transform="rotate(5 395 335.5)">р. Тарим</text><text x="6" y="247" font-size="4.8" fill="#4a6fc0" font-style="italic" text-anchor="middle" transform="rotate(50 6 247)">р. Одер</text><text x="326" y="341" font-size="4.8" fill="#4a6fc0" font-style="italic" text-anchor="middle" transform="rotate(35 326 341)">р. Амударья</text></g>
<path d="M12.3 -3.0C13.9 1.8 18.2 18.3 21.6 26.0C25.0 33.7 29.8 38.0 32.5 43.3C35.2 48.6 36.5 51.7 38.0 58.0C39.5 64.3 40.8 74.0 41.6 81.0C42.4 88.0 42.4 93.5 42.8 99.8C43.2 106.0 43.6 112.2 44.0 118.5C44.4 124.8 44.9 130.4 45.4 137.3C45.9 144.2 45.7 153.2 46.9 159.8C48.1 166.4 50.0 170.8 52.5 176.7C55.0 182.6 58.8 189.5 61.9 195.4C65.0 201.3 68.5 207.0 71.3 212.3C74.1 217.6 76.5 222.5 78.8 227.3C81.1 232.1 82.6 235.3 85.3 241.0C88.0 246.7 92.2 255.1 95.0 261.6C97.8 268.1 99.8 274.3 102.0 280.0C104.2 285.7 104.8 289.7 108.0 296.0C111.2 302.3 116.7 312.0 121.0 318.0C125.3 324.0 128.2 328.4 134.0 332.0C139.8 335.6 148.8 337.7 156.0 339.5C163.2 341.3 171.8 343.4 177.5 342.7C183.2 341.9 186.6 339.5 190.5 335.0C194.4 330.5 198.1 322.2 201.0 315.7C203.9 309.2 205.4 301.8 208.0 296.0C210.6 290.2 213.7 284.9 216.5 281.0C219.3 277.1 220.7 274.6 225.0 272.4C229.3 270.2 236.6 269.2 242.4 268.0C248.2 266.8 254.2 267.0 260.0 265.0C265.8 263.0 272.0 258.9 277.0 256.0C282.0 253.1 285.7 250.2 290.0 247.5C294.3 244.8 298.7 241.5 303.0 240.0C307.3 238.5 310.9 237.7 316.0 238.4C321.1 239.1 326.8 241.2 333.3 244.3C339.8 247.5 347.4 253.0 355.0 257.3C362.6 261.6 372.2 268.1 378.7 270.2C385.2 272.3 387.9 270.5 394.0 270.2C400.1 269.9 407.6 267.4 415.5 268.5C423.4 269.6 432.1 273.9 441.5 276.7C450.9 279.5 463.9 283.5 471.8 285.4C479.7 287.3 484.0 287.7 489.0 288.0C494.0 288.3 496.2 288.2 502.0 287.0C507.8 285.8 520.2 282.0 523.8 281.0L580 261.6L658.4 235.6L645 175L638.4 151.5L623.3 104L608 62.8L580 8.7L574.5 -3Z" fill="rgba(183,70,150,0.30)" stroke="#a3326c" stroke-width="1.7" stroke-linejoin="round"/>
<g transform="translate(425.3,146.4)"><path d="M0 13.3L-6.64 7.07A9.7 9.7 0 1 1 6.64 7.07Z" fill="#fff" stroke="#1c56c8" stroke-width="2.8" stroke-linejoin="round"/><circle cx="0" cy="0" r="2.6" fill="#1c56c8"/></g>
<g filter="url(#sh)"><rect x="10.2" y="64" width="2.6" height="76" fill="#fff" opacity="0.85"/><rect x="4.8" y="52.4" width="13" height="13" rx="1.5" fill="#fff"/><rect x="4.8" y="139.2" width="13" height="13.4" rx="1.5" fill="#fff"/><rect x="4.8" y="118.6" width="13.6" height="7.4" rx="1.5" fill="#fff"/></g>
<path d="M8 58.9H14.6M11.3 55.6V62.2" stroke="#222" stroke-width="1.7"/><path d="M8 145.9H14.6" stroke="#222" stroke-width="1.7"/><path d="M9.6 121.6H13.6M9.6 123H13.6" stroke="#ccc" stroke-width="0.5"/>
<g filter="url(#sh)"><rect x="4" y="334.6" width="56.5" height="11.4" rx="1.5" fill="#fff"/></g>
<path d="M10.3 343.8C9.2 341.8 7.4 340.8 7.4 338.9A2.9 2.9 0 0 1 13.2 338.9C13.2 340.8 11.4 341.8 10.3 343.8Z" fill="#f33"/><circle cx="10.3" cy="338.9" r="1" fill="#fff"/>
<text x="16.6" y="342.3" font-family="'Liberation Sans',sans-serif" font-size="5.7" font-weight="700" fill="#111">Как добраться</text>
<text x="67" y="342.3" font-family="'Liberation Sans',sans-serif" font-size="6.6" font-weight="700" fill="#111" text-decoration="underline" stroke="#fff" stroke-width="1.6" paint-order="stroke" stroke-opacity="0.7">Создать свою карту</text>
<rect x="755" y="338.6" width="102.5" height="7.8" rx="1.5" fill="#fff" opacity="0.72"/>
<text x="758" y="344.7" font-family="'Liberation Sans',sans-serif" font-size="5.75" font-weight="700" fill="#111">© Яндекс <tspan text-decoration="underline">Условия использования</tspan></text></svg></div>

<div class="panel">
  <div class="phead"></div>
  <div class="abs" style="left:12px;top:11px;font-size:11.6px;line-height:14px;font-weight:700;color:#1d1d1f;letter-spacing:-0.15px">Yamal-402</div>
  <svg class="abs" style="left:169.5px;top:13.4px" width="7" height="7" viewBox="0 0 7 7"><path d="M0.7 0.7L5.9 5.9M5.9 0.7L0.7 5.9" stroke="#55606e" stroke-width="1.15" fill="none"/></svg>
  <div class="pk" style="top:43.5px">Угол места</div><div class="pv" style="top:43.5px">15.80°</div>
  <div class="sep" style="top:62px"></div>
  <div class="pk" style="top:76.3px">Азимут</div><div class="pv" style="top:76.3px">219.10°</div>
  <div class="sep" style="top:94.3px"></div>
  <div class="pk" style="top:109px">Поляризация</div><div class="pv" style="top:109px">-</div>
  <div class="sep" style="top:127px"></div>
  <div class="pk" style="top:141.5px;white-space:normal;width:80px">Угол поворота ортоплексора</div><div class="pv" style="top:147.5px">-16.10°</div>
  <div class="sep" style="top:172px"></div>
  <div class="pk" style="top:186px">Точка стояния</div><div class="pv" style="top:186px">54.9°E</div>
  <div class="sep" style="top:205px"></div>
  <div class="pk" style="top:219px">Диапазон</div><div class="pv" style="top:219px">KU</div>
  <div class="sep" style="top:237.5px"></div>
  <div class="pk" style="top:251.7px">Луч</div><div class="pv" style="top:251.7px">Y402</div>
</div>

<div class="abs" style="left:135.5px;top:610px;font-size:14.6px;line-height:18px;font-weight:700;color:#2a2a2c;letter-spacing:-0.13px">Доступные спутники</div>
<div class="nav" style="left:135.8px"><svg class="abs" style="left:8px;top:13px" width="9" height="13" viewBox="0 0 9 13"><path d="M7.4 2.7L2.2 7.3L7.4 11.9" fill="none" stroke="#111" stroke-width="1.8" stroke-linecap="butt" stroke-linejoin="miter"/></svg></div>
<div class="sat" style="left:166px"><i style="background:#b5303a"></i><b>AM5</b><span>Подробнее</span></div>
<div class="sat" style="left:419px"><i style="background:#1fc4ae"></i><b>AMU7</b><span>Подробнее</span></div>
<div class="sat" style="left:672px"><i style="background:#4a98e0"></i><b>Y401</b><span>Подробнее</span></div>
<div class="sat" style="left:925px;background:#eef2fb;border:1.2px solid #8aabd6"><i style="background:#a8497c;left:13.2px;top:6.6px"></i><b style="left:28.5px;top:4.5px">Y402</b><span style="left:13.5px;top:21.5px">Подробнее</span></div>
<div class="nav" style="left:1179px;background:#fafafa"><svg class="abs" style="left:9px;top:13.5px" width="8" height="12" viewBox="0 0 8 12"><path d="M1.5 1.2L6.5 6.2L1.5 11.2" fill="none" stroke="#4a4a4a" stroke-width="1.25" stroke-linecap="butt" stroke-linejoin="miter"/></svg></div>
<svg class="abs" style="left:1143px;top:665px" width="9" height="14" viewBox="0 0 9 14"><path d="M1 1L1 11L3.3 8.8L5 12.6L6.6 11.9L4.9 8.2L8 8.1Z" fill="#111" stroke="#fff" stroke-width="0.6"/></svg>

<div class="feat" style="left:111.5px"><svg width="15" height="15" viewBox="0 0 15 15" style="overflow:visible"><path d="M0.3 0.85H12.9V13.8M0.9 13.2L12.9 0.85" fill="none" stroke="#2f6bdc" stroke-width="1.7"/></svg><p style="top:13.5px;letter-spacing:0.19px">Визуализация зон покрытия 5 спутников<br><span style="letter-spacing:0.08px">(Yamal-401, Yamal-402, Yamal-300K,</span><br><span style="letter-spacing:-0.31px">Express-AM5, Express-AM6)</span></p></div>
<div class="feat" style="left:487.5px"><svg width="15" height="15" viewBox="0 0 15 15" style="overflow:visible"><path d="M0.3 0.85H12.9V13.8M0.9 13.2L12.9 0.85" fill="none" stroke="#2f6bdc" stroke-width="1.7"/></svg><p style="top:36px;letter-spacing:0.41px">Точное отображение полигонов покрытия</p></div>
<div class="feat" style="left:863.5px"><svg width="15" height="15" viewBox="0 0 15 15" style="overflow:visible"><path d="M0.3 0.85H12.9V13.8M0.9 13.2L12.9 0.85" fill="none" stroke="#2f6bdc" stroke-width="1.7"/></svg><p style="top:36px;letter-spacing:0.24px">Интеграция с API Яндекс.Карт</p></div>
</body>
</html>
